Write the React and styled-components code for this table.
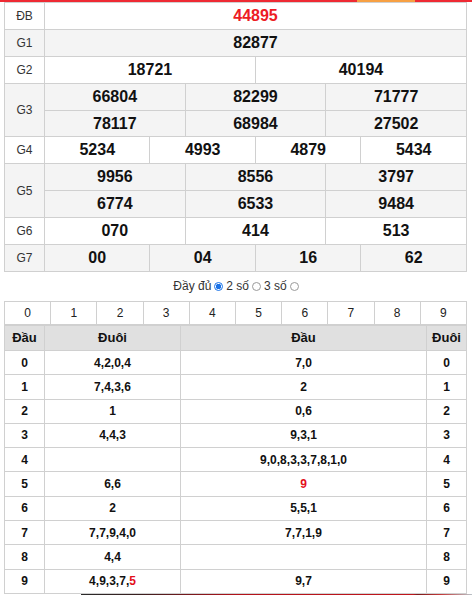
import React from 'react';
import styled, { createGlobalStyle } from 'styled-components';

const GlobalStyle = createGlobalStyle`
  body {
    margin: 0;
    background: #fff;
    font-family: "Liberation Sans", Arial, sans-serif;
    color: #111;
  }
`;

const prizes = [
  { label: 'ĐB', rows: [['44895']], special: true },
  { label: 'G1', rows: [['82877']] },
  { label: 'G2', rows: [['18721', '40194']] },
  { label: 'G3', rows: [['66804', '82299', '71777'], ['78117', '68984', '27502']] },
  { label: 'G4', rows: [['5234', '4993', '4879', '5434']] },
  { label: 'G5', rows: [['9956', '8556', '3797'], ['6774', '6533', '9484']] },
  { label: 'G6', rows: [['070', '414', '513']] },
  { label: 'G7', rows: [['00', '04', '16', '62']] },
];

// '*' marks a digit drawn in red
const loto = [
  ['4,2,0,4', '7,0'],
  ['7,4,3,6', '2'],
  ['1', '0,6'],
  ['4,4,3', '9,3,1'],
  ['', '9,0,8,3,3,7,8,1,0'],
  ['6,6', '*9'],
  ['2', '5,5,1'],
  ['7,7,9,4,0', '7,7,1,9'],
  ['4,4', ''],
  ['4,9,3,7,*5', '9,7'],
];

const Digits = ({ text }) => {
  if (!text) return null;
  const parts = text.split(',');
  return parts.map((p, i) => (
    <React.Fragment key={i}>
      {p.startsWith('*') ? <Hot>{p.slice(1)}</Hot> : p}
      {i < parts.length - 1 ? ',' : ''}
    </React.Fragment>
  ));
};

const App = () => {
  return (
    <Page>
      <GlobalStyle />
      <TopBar>
        <Accent />
      </TopBar>

      <ResultTable>
        <colgroup>
          <col style={{ width: 40 }} />
          {Array.from({ length: 12 }).map((_, i) => (
            <col key={i} />
          ))}
        </colgroup>
        <tbody>
          {prizes.map((prize, pi) =>
            prize.rows.map((row, ri) => (
              <PrizeRow key={`${pi}-${ri}`} $shade={pi % 2 === 1}>
                {ri === 0 && <Label rowSpan={prize.rows.length}>{prize.label}</Label>}
                {row.map((num, ci) => (
                  <Num key={ci} colSpan={12 / row.length} $special={prize.special}>
                    {num}
                  </Num>
                ))}
              </PrizeRow>
            ))
          )}
        </tbody>
      </ResultTable>

      <Options>
        Đầy đủ <Radio $checked /> 2 số <Radio /> 3 số <Radio />
      </Options>

      <DigitTable>
        <tbody>
          <tr>
            {Array.from({ length: 10 }).map((_, i) => (
              <DigitCell key={i}>{i}</DigitCell>
            ))}
          </tr>
        </tbody>
      </DigitTable>

      <LotoTable>
        <colgroup>
          <col style={{ width: 40 }} />
          <col style={{ width: 136 }} />
          <col style={{ width: 246 }} />
          <col style={{ width: 40 }} />
        </colgroup>
        <thead>
          <tr>
            <Head>Đầu</Head>
            <Head>Đuôi</Head>
            <Head>Đầu</Head>
            <Head>Đuôi</Head>
          </tr>
        </thead>
        <tbody>
          {loto.map(([tail, head], i) => (
            <tr key={i}>
              <LotoCell>{i}</LotoCell>
              <LotoCell>
                <Digits text={tail} />
              </LotoCell>
              <LotoCell>
                <Digits text={head} />
              </LotoCell>
              <LotoCell>{i}</LotoCell>
            </tr>
          ))}
        </tbody>
      </LotoTable>

      <BottomStrip />
    </Page>
  );
};

export default App;

const Page = styled.div`
  width: 472px;
`;

const TopBar = styled.div`
  position: relative;
  height: 2px;
  background: #ee2a33;
`;

const Accent = styled.div`
  position: absolute;
  left: 357px;
  top: 0;
  width: 58px;
  height: 2px;
  background: #f7a043;
`;

const ResultTable = styled.table`
  margin-left: 4px;
  width: 463px;
  table-layout: fixed;
  border-collapse: collapse;
  border: 1px solid #d0d0d0;
  border-top: none;
`;

const PrizeRow = styled.tr`
  background: ${p => (p.$shade ? '#f4f4f4' : '#fff')};
`;

const Label = styled.td`
  height: 25.9px;
  padding: 0;
  border: 1px solid #d0d0d0;
  text-align: center;
  font-size: 12px;
  color: #333;
`;

const Num = styled.td`
  height: 25.9px;
  padding: 0;
  border: 1px solid #d0d0d0;
  text-align: center;
  font-size: 16px;
  font-weight: 700;
  color: ${p => (p.$special ? '#ed1c24' : '#111')};
`;

const Options = styled.div`
  display: flex;
  align-items: center;
  justify-content: center;
  gap: 3px;
  height: 29px;
  font-size: 12px;
  color: #333;
`;

const Radio = styled.span`
  display: inline-block;
  box-sizing: border-box;
  width: 9px;
  height: 9px;
  border-radius: 50%;
  border: 1px solid ${p => (p.$checked ? '#1a73e8' : '#9a9a9a')};
  background: ${p => (p.$checked ? 'radial-gradient(circle, #1a73e8 0 2.5px, #fff 3px)' : '#fff')};
`;

const DigitTable = styled.table`
  margin-left: 4px;
  width: 463px;
  table-layout: fixed;
  border-collapse: collapse;
`;

const DigitCell = styled.td`
  height: 22px;
  padding: 0;
  border: 1px solid #d0d0d0;
  text-align: center;
  font-size: 12px;
  color: #222;
`;

const LotoTable = styled.table`
  margin-left: 4px;
  width: 463px;
  table-layout: fixed;
  border-collapse: collapse;
`;

const Head = styled.th`
  height: 24px;
  padding: 0;
  border: 1px solid #d0d0d0;
  background: #e0e0e0;
  text-align: center;
  font-size: 13px;
  font-weight: 700;
  color: #111;
`;

const LotoCell = styled.td`
  height: 23.3px;
  padding: 0;
  border: 1px solid #d0d0d0;
  text-align: center;
  font-size: 12px;
  font-weight: 700;
  color: #111;
`;

const Hot = styled.span`
  color: #e3101b;
`;

const BottomStrip = styled.div`
  height: 2px;
  margin-left: 81px;
  background: linear-gradient(90deg, #2a2a2a 0%, #3a2020 15%, #b3121a 40%, #c0161c 85%, #7a1a1a 86%, #c43a3a 92%, #b9c3c8 100%);
`;
